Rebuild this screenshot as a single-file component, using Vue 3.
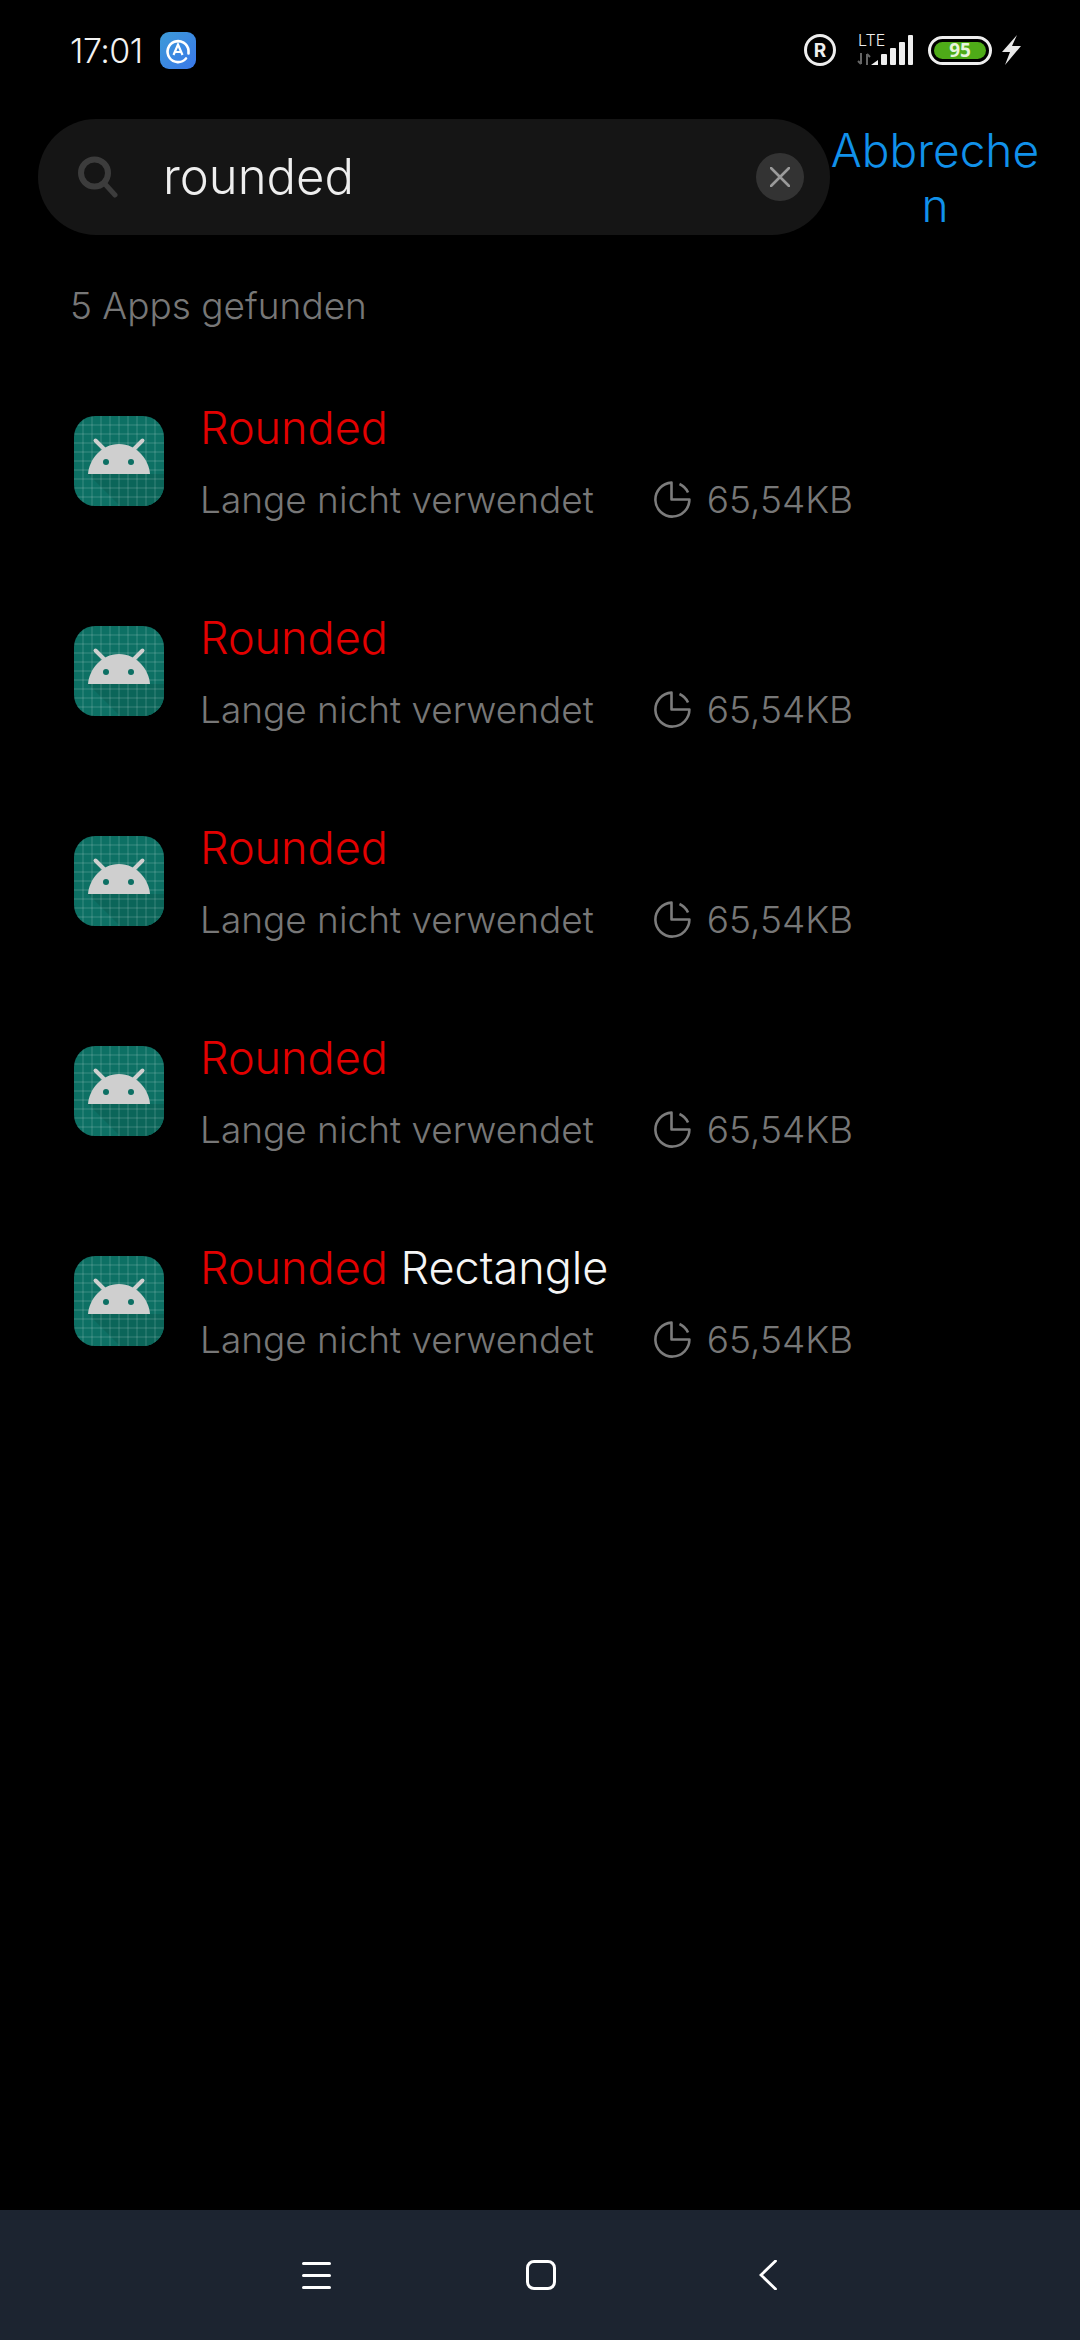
<script setup>
const rows = [
  { hit: 'Rounded', rest: '' },
  { hit: 'Rounded', rest: '' },
  { hit: 'Rounded', rest: '' },
  { hit: 'Rounded', rest: '' },
  { hit: 'Rounded', rest: ' Rectangle' },
]
const grid = [9, 18, 27, 36, 45, 54, 63, 72, 81]
</script>

<template>
  <div class="page">
    <div class="status">
      <div class="status-left">
        <span class="time">17:01</span>
        <svg class="notif" viewBox="0 0 36 37">
          <defs>
            <linearGradient id="nb" x1="0" y1="0" x2="1" y2="1">
              <stop offset="0" stop-color="#3d9bd8" />
              <stop offset="1" stop-color="#3a78ea" />
            </linearGradient>
          </defs>
          <rect width="36" height="37" rx="9" fill="url(#nb)" />
          <path d="M26 26.5 A10.5 10.5 0 1 1 28.5 18.5 L28.5 21.5" fill="none" stroke="#fff" stroke-width="2.6" stroke-linecap="round" />
          <path d="M13.5 23 L18 12.5 L22.5 23 M15 20 H21" fill="none" stroke="#fff" stroke-width="2.2" />
        </svg>
      </div>
      <div class="status-right">
        <span class="reg">R</span>
        <div class="net">
          <span class="lte">LTE</span>
          <svg class="arrows" viewBox="0 0 14 12">
            <path d="M4 0 V11 M1 8 L4 11 M10 12 V1 M10 1 L13 4" fill="none" stroke="#666" stroke-width="2" />
          </svg>
          <svg class="bars" viewBox="0 0 42 30">
            <path d="M0 30 L7 25 V30 Z" fill="#eee" />
            <rect x="10" y="19" width="6" height="11" rx="1" fill="#eee" />
            <rect x="19" y="13" width="6" height="17" rx="1" fill="#eee" />
            <rect x="28" y="7" width="6" height="23" rx="1" fill="#eee" />
            <rect x="37" y="0" width="5" height="30" rx="1" fill="#eee" />
          </svg>
        </div>
        <div class="battery"><div class="battery-fill">95</div></div>
        <svg class="bolt" viewBox="0 0 19 30">
          <path d="M15 0 L0 17 H8 L3 30 L19 11 H10 Z" fill="#e8e8e8" />
        </svg>
      </div>
    </div>

    <div class="search-row">
      <div class="search">
        <svg class="glass" viewBox="0 0 40 42">
          <circle cx="16.5" cy="17" r="13.5" fill="none" stroke="#3c3c3c" stroke-width="6" />
          <path d="M27 28 L37 39" stroke="#3c3c3c" stroke-width="5" stroke-linecap="round" />
        </svg>
        <span class="query">rounded</span>
        <div class="clear">
          <svg viewBox="0 0 20 20" class="clear-x">
            <path d="M1 1 L19 19 M19 1 L1 19" stroke="#9a9a9a" stroke-width="2.6" stroke-linecap="round" />
          </svg>
        </div>
      </div>
      <div class="cancel">Abbrechen</div>
    </div>

    <div class="count">5 Apps gefunden</div>

    <div class="list">
      <div v-for="(r, i) in rows" :key="i" class="row">
        <svg class="app" viewBox="0 0 90 90">
          <defs>
            <clipPath :id="'c' + i"><rect width="90" height="90" rx="21" /></clipPath>
          </defs>
          <g :clip-path="'url(#c' + i + ')'">
            <rect width="90" height="90" fill="#0d7064" />
            <path d="M14 58 L46 90 H90 V58 Z" fill="#0b6559" />
            <g stroke="#ffffff" stroke-opacity="0.2" stroke-width="1">
              <path v-for="g in grid" :key="'v' + g" :d="`M${g} 0 V90`" />
              <path v-for="g in grid" :key="'h' + g" :d="`M0 ${g} H90`" />
            </g>
            <path d="M21.5 24.5 L33 36 M68.5 24.5 L57 36" stroke="#cfcfcf" stroke-width="4" stroke-linecap="round" />
            <path d="M14 58 C15 44 27 28 45 28 C63 28 75 44 76 58 Z" fill="#cfcfcf" />
            <circle cx="32" cy="46" r="3" fill="#0d7064" />
            <circle cx="57" cy="46" r="3" fill="#0d7064" />
          </g>
        </svg>
        <div class="info">
          <div class="title"><span class="hit">{{ r.hit }}</span>{{ r.rest }}</div>
          <div class="meta">
            <span class="meta-text">Lange nicht verwendet</span>
            <svg class="pie" viewBox="0 0 37 37">
              <path d="M17.5 1.6 A17 17 0 1 0 35.4 18.5 H17.5 Z" fill="none" stroke="#7c7c7c" stroke-width="2.6" stroke-linejoin="round" />
              <path d="M25.5 3 A17 17 0 0 1 34 11.5" fill="none" stroke="#7c7c7c" stroke-width="2.6" />
            </svg>
            <span class="size">65,54KB</span>
          </div>
        </div>
      </div>
    </div>

    <div class="nav">
      <svg class="nav-menu" viewBox="0 0 29 27">
        <path d="M1.5 1.5 H27.5 M1.5 13.5 H27.5 M1.5 25.5 H27.5" stroke="#fff" stroke-width="3" stroke-linecap="round" />
      </svg>
      <div class="nav-home"></div>
      <svg class="nav-back" viewBox="0 0 18 30">
        <path d="M16.5 1 L2 15 L16.5 29" fill="none" stroke="#fff" stroke-width="2.8" stroke-linecap="round" />
      </svg>
    </div>
  </div>
</template>

<style scoped>
.page {
  width: 1080px;
  height: 2340px;
  background: #000;
  display: flex;
  flex-direction: column;
  font-family: Inter, "Noto Sans", sans-serif;
  font-weight: 300;
  overflow: hidden;
}
.status {
  height: 100px;
  flex: none;
  display: flex;
  justify-content: space-between;
  padding: 0 59px 0 70px;
  box-sizing: border-box;
  align-items: center;
}
.status-left { display: flex; align-items: center; gap: 17px; }
.time { color: #f2f2f2; font-size: 34px; letter-spacing: -0.5px; }
.notif { width: 36px; height: 37px; }
.status-right { display: flex; align-items: center; }
.reg {
  width: 32px;
  height: 32px;
  box-sizing: border-box;
  border: 3px solid #eee;
  border-radius: 50%;
  color: #eee;
  font-size: 19px;
  font-weight: 700;
  display: flex;
  align-items: center;
  justify-content: center;
}
.net { position: relative; width: 56px; height: 30px; margin-left: 21px; }
.lte { position: absolute; left: 1px; top: -3px; color: #eee; font-size: 16px; font-weight: 300; line-height: 16px; }
.arrows { position: absolute; left: 0; bottom: 0; width: 14px; height: 12px; }
.bars { position: absolute; right: 0; bottom: 0; width: 42px; height: 30px; }
.battery {
  width: 64px;
  height: 29px;
  box-sizing: border-box;
  border: 3px solid #eee;
  border-radius: 15px;
  padding: 3px;
  margin-left: 15px;
}
.battery-fill {
  height: 100%;
  border-radius: 9px;
  background: #4eab18;
  color: #e8f5dc;
  font-size: 19px;
  font-weight: 700;
  line-height: 17px;
  text-align: center;
  font-family: "Noto Sans", sans-serif;
}
.bolt { width: 19px; height: 30px; margin-left: 10px; }

.search-row { display: flex; padding-left: 38px; margin-top: 19px; flex: none; }
.search {
  width: 792px;
  height: 116px;
  border-radius: 58px;
  background: #151515;
  display: flex;
  align-items: center;
  padding-left: 40px;
  padding-right: 26px;
  box-sizing: border-box;
}
.glass { width: 40px; height: 42px; flex: none; }
.query { color: #eee; font-size: 49px; margin-left: 45px; flex: 1; line-height: 60px; }
.clear {
  width: 48px;
  height: 48px;
  border-radius: 50%;
  background: #333;
  display: flex;
  align-items: center;
  justify-content: center;
}
.clear-x { width: 20px; height: 20px; }
.cancel {
  width: 210px;
  color: #1191ea;
  font-size: 46px;
  line-height: 55px;
  text-align: center;
  word-break: break-all;
  padding-top: 4px;
}

.count { color: #777; font-size: 37px; line-height: 44px; padding-left: 70px; margin-top: 49px; flex: none; }

.list { margin-top: 28px; flex: none; }
.row { height: 210px; display: flex; align-items: center; padding-left: 74px; }
.app { width: 90px; height: 90px; flex: none; }
.info { margin-left: 36px; padding-top: 5px; }
.title { color: #f5f5f5; font-size: 45px; line-height: 60px; white-space: pre; }
.hit { color: #e30000; }
.meta { display: flex; align-items: center; margin-top: 11px; height: 60px; color: #777; font-size: 37px; }
.pie { width: 37px; height: 37px; margin-left: 60px; }
.size { margin-left: 16px; }

.nav {
  height: 130px;
  margin-top: auto;
  background: #1c2430;
  flex: none;
  display: flex;
  align-items: center;
  padding-left: 302px;
  box-sizing: border-box;
}
.nav-menu { width: 29px; height: 27px; }
.nav-home {
  width: 30px;
  height: 30px;
  box-sizing: border-box;
  border: 3px solid #fff;
  border-radius: 8px;
  margin-left: 195px;
}
.nav-back { width: 18px; height: 30px; margin-left: 203px; }
</style>
